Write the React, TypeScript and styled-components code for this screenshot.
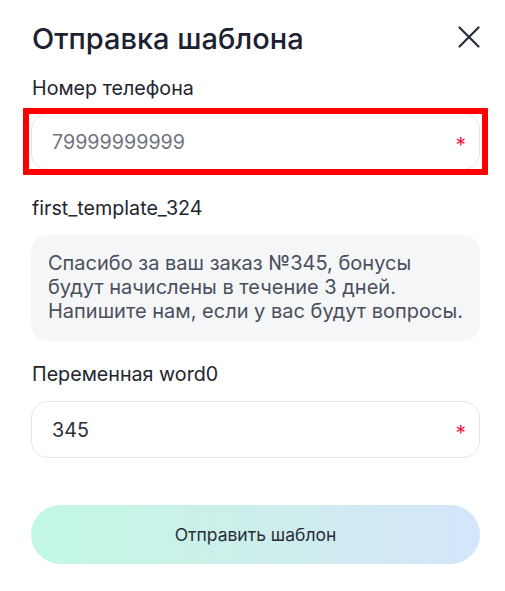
import React from 'react';
import styled, { createGlobalStyle } from 'styled-components';

// ── Global ────────────────────────────────────────────────────────────────────

const GlobalStyle = createGlobalStyle`
  html, body {
    margin: 0;
    padding: 0;
    background: #ffffff;
  }
  * {
    box-sizing: border-box;
  }
  body {
    font-family: Inter, 'Noto Sans', sans-serif;
  }
`;

// ── Component ─────────────────────────────────────────────────────────────────

export default function App() {
  return (
    <>
      <GlobalStyle />
      <Modal>
        <Header>
          <Title>Отправка шаблона</Title>
          <CloseButton aria-label="Закрыть">
            <svg width="22" height="22" viewBox="0 0 22 22" fill="none">
              <path d="M1.5 1.5L20.5 20.5M20.5 1.5L1.5 20.5" stroke="#262c38" strokeWidth="2.2" strokeLinecap="round" />
            </svg>
          </CloseButton>
        </Header>

        <Form>
          <Field $gap={13} $after={26}>
            <Label>Номер телефона</Label>
            <InputWrap>
              <Input placeholder="79999999999" />
              <Required>*</Required>
              <Highlight />
            </InputWrap>
          </Field>

          <Field $gap={15} $after={21}>
            <Label>first_template_324</Label>
            <Preview>
              Спасибо за ваш заказ №345, бонусы<br />
              будут начислены в течение 3 дней.<br />
              Напишите нам, если у вас будут вопросы.
            </Preview>
          </Field>

          <Field $gap={15} $after={47}>
            <Label>Переменная word0</Label>
            <InputWrap>
              <Input defaultValue="345" />
              <Required>*</Required>
            </InputWrap>
          </Field>

          <SubmitButton type="button">Отправить шаблон</SubmitButton>
        </Form>
      </Modal>
    </>
  );
}

// ── Styled components ─────────────────────────────────────────────────────────

const Modal = styled.div`
  width: 505px;
  min-height: 591px;
  padding: 21px 24px 0 31px;
  display: flex;
  flex-direction: column;
`;

const Header = styled.div`
  display: flex;
  align-items: flex-start;
  justify-content: space-between;
  padding-left: 1px;
`;

const Title = styled.h2`
  margin: 0;
  font-family: Inter, 'Noto Sans', sans-serif;
  font-weight: 500;
  font-size: 29px;
  line-height: 36px;
  color: #1d2130;
`;

const CloseButton = styled.button`
  width: 24px;
  height: 24px;
  padding: 0;
  margin-top: 4px;
  border: none;
  background: none;
  display: flex;
  align-items: center;
  justify-content: center;
  cursor: pointer;
`;

const Form = styled.div`
  display: flex;
  flex-direction: column;
  margin-top: 19px;
  width: 449px;
`;

const Field = styled.div<{ $gap: number; $after: number }>`
  display: flex;
  flex-direction: column;
  gap: ${(p) => p.$gap}px;
  margin-bottom: ${(p) => p.$after}px;
`;

const Label = styled.label`
  padding-left: 1px;
  font-family: Inter, 'Noto Sans', sans-serif;
  font-size: 19.7px;
  line-height: 24px;
  color: #23262f;
`;

const InputWrap = styled.div`
  position: relative;
  height: 57px;
  display: flex;
  align-items: center;
  border: 1px solid #e6e6ef;
  border-radius: 17px;
  padding: 0 13px 0 20px;
  background: #ffffff;
`;

const Input = styled.input`
  flex: 1;
  min-width: 0;
  height: 100%;
  border: none;
  outline: none;
  background: transparent;
  padding: 0;
  font-family: Inter, 'Noto Sans', sans-serif;
  font-size: 19.7px;
  color: #2b2e36;

  &::placeholder {
    color: #70737d;
  }
`;

const Required = styled.span`
  font-family: Inter, 'Noto Sans', sans-serif;
  font-size: 21px;
  line-height: 1;
  color: #ff1744;
  margin-top: 7px;
`;

const Highlight = styled.div`
  position: absolute;
  left: -9px;
  right: -9px;
  top: -6px;
  bottom: -6px;
  border: 6px solid #ff0000;
  border-radius: 1px;
  pointer-events: none;
`;

const Preview = styled.div`
  background: #f5f6f8;
  border-radius: 17px;
  padding: 16px 16px 18px 17px;
  font-family: Inter, 'Noto Sans', sans-serif;
  font-size: 20px;
  line-height: 24px;
  color: #4a4f5c;
  white-space: nowrap;
`;

const SubmitButton = styled.button`
  height: 59px;
  width: 100%;
  border: none;
  border-radius: 30px;
  background: linear-gradient(90deg, #c2f8e5 0%, #cdeeea 50%, #d4e5fb 100%);
  font-family: Inter, 'Noto Sans', sans-serif;
  font-size: 17.5px;
  color: #2a2e38;
  cursor: pointer;
`;
